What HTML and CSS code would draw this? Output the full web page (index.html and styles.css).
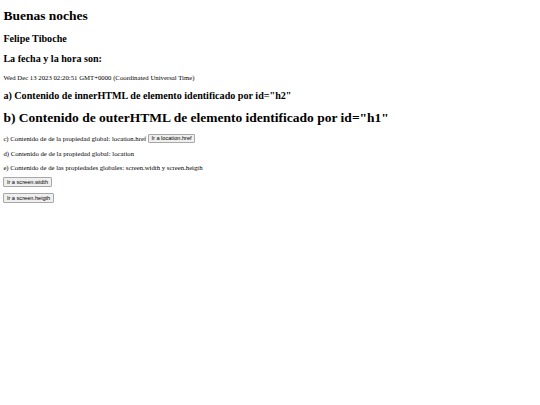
FILE: index.html
```html
<!DOCTYPE html>
<html lang="es">
<head>
<meta charset="utf-8">
<title>Buenas noches</title>
<link rel="stylesheet" href="styles.css">
</head>
<body>
<h1 class="title greeting">Buenas noches</h1>
<h2 class="sub">Felipe Tiboche</h2>
<h2 class="sub">La fecha y la hora son:</h2>
<p class="text">Wed Dec 13 2023 02:20:51 GMT+0000 (Coordinated Universal Time)</p>
<h2 class="sub">a) Contenido de innerHTML de elemento identificado por id="h2"</h2>
<h1 class="title outer">b) Contenido de outerHTML de elemento identificado por id="h1"</h1>
<p class="text">c) Contenido de de la propiedad global: location.href <button class="btn">Ir a location.href</button></p>
<p class="text">d) Contenido de de la propiedad global: location</p>
<p class="text">e) Contenido de de las propiedades globales: screen.width y screen.heigth</p>
<p class="text"><button class="btn">Ir a screen.width</button></p>
<p class="text"><button class="btn">Ir a screen.heigth</button></p>
</body>
</html>
```
FILE: styles.css
```css
html {
  background: #fff;
}
body {
  margin: 0 3.375px 3.375px;
  font-family: "Liberation Serif", "Times New Roman", serif;
  font-size: 6.75px;
  color: #000;
}
.title {
  font-size: 13.5px;
  font-weight: bold;
  margin: 9.05px 0;
}
.greeting {
  margin-top: 7.5px;
}
.outer {
  margin-bottom: 7.5px;
}
.sub {
  font-size: 10.125px;
  font-weight: bold;
  margin: 9.4px 0;
}
.text {
  margin: 6.6px 0;
}
.btn {
  font-family: "Liberation Sans", Arial, sans-serif;
  font-size: 5.625px;
  line-height: 1.15;
  color: #000;
  background: #efefef;
  border: 1px solid #a8a8a8;
  border-radius: 1px;
  padding: 0.5px 2.5px;
}
```
